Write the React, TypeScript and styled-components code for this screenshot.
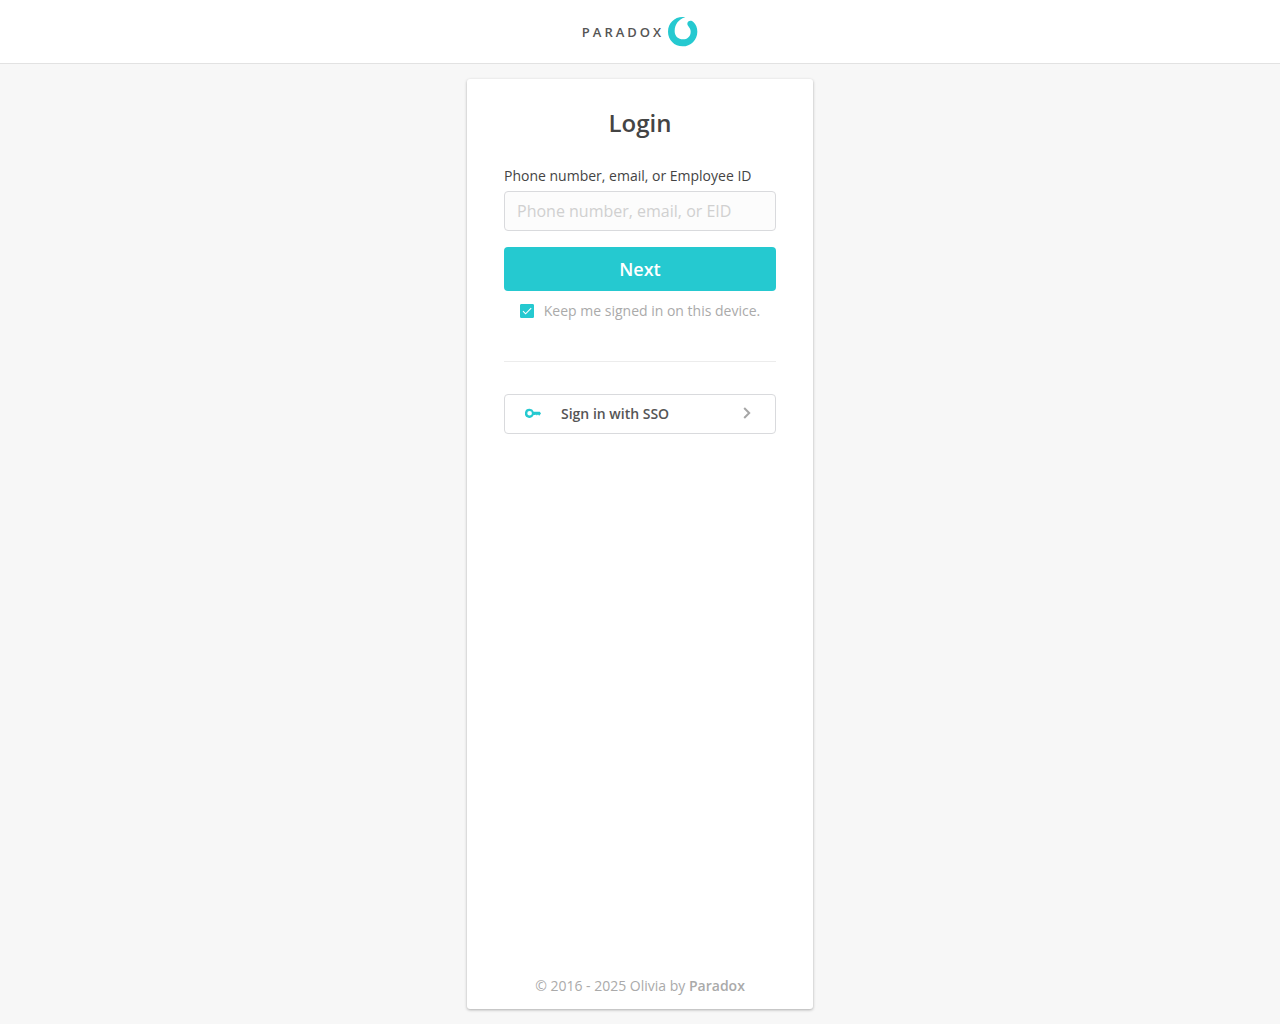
import React from "react";
import styled, { createGlobalStyle } from "styled-components";

const teal = "#25c9d0";

const GlobalStyle = createGlobalStyle`
  *, *::before, *::after { box-sizing: border-box; }
  body {
    margin: 0;
    background: #f7f7f7;
    color: #444;
    font-family: "Open Sans", sans-serif;
    font-size: 14px;
    line-height: 20px;
  }
`;

const Page = styled.div`
  display: flex;
  flex-direction: column;
  min-height: 100vh;
`;

const Header = styled.header`
  display: flex;
  align-items: center;
  justify-content: center;
  height: 64px;
  background: #fff;
  border-bottom: 1px solid #e2e2e2;
`;

const Logo = styled.div`
  display: flex;
  align-items: center;
  gap: 4px;
`;

const Wordmark = styled.span`
  color: #555;
  font-size: 13px;
  font-weight: 600;
  letter-spacing: 3px;
`;

const Main = styled.main`
  display: flex;
  flex: 1;
  justify-content: center;
  padding: 15px;
`;

const Card = styled.section`
  display: flex;
  flex-direction: column;
  width: 100%;
  max-width: 346px;
  padding: 28px 37px 13px;
  background: #fff;
  border-radius: 3px;
  box-shadow: 0 1px 3px rgba(0, 0, 0, 0.3);
`;

const Title = styled.h1`
  margin: 0 0 27px;
  font-size: 24px;
  font-weight: 600;
  line-height: 32px;
  text-align: center;
`;

const Form = styled.form`
  display: flex;
  flex-direction: column;
`;

const FieldLabel = styled.label`
  line-height: 20px;
  margin-bottom: 5px;
`;

const TextInput = styled.input`
  height: 40px;
  padding: 0 12px;
  background: #fcfcfc;
  border: 1px solid #d9dadd;
  border-radius: 4px;
  color: #444;
  font: inherit;
  font-size: 16px;
  &::placeholder { color: #d0d0d0; opacity: 1; }
`;

const NextButton = styled.button`
  height: 44px;
  margin: 16px 0 10px;
  padding: 0;
  background: ${teal};
  border: 0;
  border-radius: 4px;
  color: #fff;
  font: inherit;
  font-size: 18px;
  font-weight: 600;
  cursor: pointer;
`;

const KeepRow = styled.label`
  display: flex;
  align-items: center;
  justify-content: center;
  gap: 10px;
  color: #aaa;
`;

const TickBox = styled.span`
  display: grid;
  width: 14px;
  height: 14px;
  > * { grid-area: 1 / 1; }
  > svg { pointer-events: none; visibility: hidden; }
  > input:checked + svg { visibility: visible; }
`;

const Checkbox = styled.input`
  appearance: none;
  width: 14px;
  height: 14px;
  margin: 0;
  border: 1px solid ${teal};
  border-radius: 1px;
  &:checked { background: ${teal}; }
`;

const Divider = styled.hr`
  width: 100%;
  height: 1px;
  margin: 40px 0 32px;
  background: #ececec;
  border: 0;
`;

const SsoButton = styled.button`
  display: flex;
  align-items: center;
  height: 40px;
  padding: 0 20px;
  background: #fff;
  border: 1px solid #d9dadd;
  border-radius: 4px;
  color: #555;
  font: inherit;
  font-weight: 600;
  text-align: left;
  cursor: pointer;
`;

const SsoText = styled.span`
  flex: 1;
  margin-left: 20px;
`;

const Footer = styled.footer`
  margin-top: auto;
  color: #aaa;
  text-align: center;
`;

const FooterLink = styled.a`
  color: inherit;
  font-weight: 600;
  text-decoration: none;
`;

const RingMark = () => (
  <svg width="30" height="30" viewBox="0 0 90 90" aria-hidden="true">
    <path
      fill={teal}
      d="M52 1C24-4 0 16 0 44C0 68 19 88 44 88C68 88 88 69 88 44C88 32 84 22 76 15C69 7 58 12 58 20C58 28 68 31 68 44C68 58 58 67 45 67C31 67 20 58 20 42C20 23 32 6 52 1Z"
    />
  </svg>
);

const CheckIcon = () => (
  <svg width="14" height="14" viewBox="0 0 14 14" fill="none" stroke="#fff" aria-hidden="true">
    <path d="M3 7.2L5.6 9.8L11.2 4.2" strokeWidth="1.1" />
  </svg>
);

const KeyIcon = () => (
  <svg width="16" height="16" viewBox="0 0 16 16" aria-hidden="true">
    <path
      fill={teal}
      fillRule="evenodd"
      d="M4.6 2.7A4.6 4.6 0 1 0 8.7 9.1H10.2L11 8.4L11.8 9.6L13 8.6L14.2 9.8L16 7.6L14.8 5.7H8.7A4.6 4.6 0 0 0 4.6 2.7ZM4.6 5A2.3 2.3 0 1 1 4.6 9.6A2.3 2.3 0 0 1 4.6 5Z"
    />
  </svg>
);

const ChevronIcon = () => (
  <svg width="16" height="16" viewBox="0 0 16 16" fill="none" stroke="#a6a6a6" aria-hidden="true">
    <path d="M5.2 2L10.2 7L5.2 12" strokeWidth="2" />
  </svg>
);

export default function App() {
  return (
    <>
      <GlobalStyle />
      <Page>
        <Header>
          <Logo>
            <Wordmark>PARADOX</Wordmark>
            <RingMark />
          </Logo>
        </Header>
        <Main>
          <Card>
            <Title>Login</Title>
            <Form onSubmit={(event) => event.preventDefault()}>
              <FieldLabel htmlFor="identity">Phone number, email, or Employee ID</FieldLabel>
              <TextInput id="identity" type="text" placeholder="Phone number, email, or EID" />
              <NextButton type="submit">Next</NextButton>
              <KeepRow htmlFor="keep">
                <TickBox>
                  <Checkbox id="keep" type="checkbox" defaultChecked />
                  <CheckIcon />
                </TickBox>
                Keep me signed in on this device.
              </KeepRow>
            </Form>
            <Divider />
            <SsoButton type="button">
              <KeyIcon />
              <SsoText>Sign in with SSO</SsoText>
              <ChevronIcon />
            </SsoButton>
            <Footer>
              © 2016 - 2025 Olivia by <FooterLink href="#">Paradox</FooterLink>
            </Footer>
          </Card>
        </Main>
      </Page>
    </>
  );
}
